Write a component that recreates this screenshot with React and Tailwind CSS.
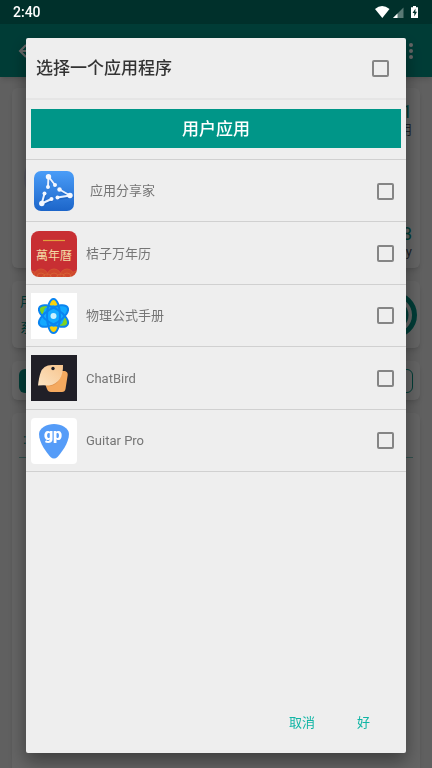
import React, { useState } from 'react';

const ShareIcon = () => (
  <svg viewBox="0 0 40 40" className="mx-[3px] w-10 h-10 shrink-0" aria-hidden="true">
    <defs>
      <linearGradient id="shareBg" x1="0" y1="0" x2="0" y2="1">
        <stop offset="0" stopColor="#4a9df8" />
        <stop offset="1" stopColor="#1c65c9" />
      </linearGradient>
    </defs>
    <rect width="40" height="40" rx="7" fill="url(#shareBg)" />
    <path
      d="M14 16 14.500 5.500 21 14M25.500 18.500 36 24.500 23.500 26.500M17.500 28 7.800 32.500 10.500 22.500"
      transform="translate(0.800 1.200)"
      fill="none"
      stroke="#0f4fa8"
      strokeOpacity="0.400"
      strokeWidth="2.400"
      strokeLinecap="round"
    />
    <path
      d="M14 16 14.500 5.500 21 14M25.500 18.500 36 24.500 23.500 26.500M17.500 28 7.800 32.500 10.500 22.500"
      fill="none"
      stroke="#eaf2ff"
      strokeWidth="2"
      strokeLinecap="round"
      strokeLinejoin="round"
    />
    <g fill="#f4f8ff">
      <circle cx="14.500" cy="5.800" r="2.700" />
      <circle cx="14" cy="16" r="2" />
      <circle cx="21" cy="14" r="2" />
      <circle cx="36" cy="24.500" r="2.700" />
      <circle cx="25.500" cy="18.500" r="2.200" />
      <circle cx="23.500" cy="26.500" r="2" />
      <circle cx="7.800" cy="32.500" r="2.700" />
      <circle cx="10.500" cy="22.500" r="2" />
      <circle cx="17.500" cy="28" r="2" />
    </g>
  </svg>
);

const CalendarIcon = () => (
  <svg viewBox="0 0 46 46" className="w-[46px] h-[46px] shrink-0" aria-hidden="true">
    <defs>
      <clipPath id="calClip">
        <rect width="46" height="46" rx="8" />
      </clipPath>
    </defs>
    <g clipPath="url(#calClip)">
      <rect width="46" height="46" fill="#c82f33" />
      <path d="M12 9.500H34" stroke="#e2a13c" strokeWidth="1.200" />
      <g fill="#cf472c" stroke="#d45a32" strokeWidth="0.800">
        <circle cx="0" cy="47" r="7" />
        <circle cx="10" cy="45" r="7" />
        <circle cx="23" cy="45" r="7" />
        <circle cx="36" cy="45" r="7" />
        <circle cx="46" cy="47" r="7" />
      </g>
      <g fill="none" stroke="#d96a38" strokeWidth="0.700">
        <circle cx="10" cy="46" r="4" />
        <circle cx="23" cy="46" r="4" />
        <circle cx="36" cy="46" r="4" />
        <circle cx="16" cy="48" r="5" />
        <circle cx="30" cy="48" r="5" />
      </g>
      <text
        x="23"
        y="29"
        textAnchor="middle"
        fontSize="12"
        fill="#f3d9a4"
        className="font-['Noto_Sans_CJK_TC',sans-serif]"
      >萬年曆</text>
    </g>
  </svg>
);

const AtomIcon = () => (
  <svg viewBox="0 0 46 46" className="w-[46px] h-[46px] shrink-0" aria-hidden="true">
    <rect width="46" height="46" fill="#fff" />
    <ellipse cx="22.500" cy="23" rx="6.500" ry="17" fill="#fdd20a" />
    <ellipse cx="22.500" cy="23" rx="7.500" ry="16.500" fill="#7ed321" transform="rotate(-58 22.500 23)" />
    <ellipse cx="22.500" cy="23" rx="7.500" ry="16.500" fill="#12a9ff" transform="rotate(58 22.500 23)" />
    <path d="M22.500 12 32 17 34 24 31 31 22.500 34 13 29 11 23 14 15z" fill="#12a9ff" />
    <g fill="none" stroke="#0a84f0" strokeWidth="2">
      <ellipse cx="22.500" cy="23" rx="6.500" ry="17" />
      <ellipse cx="22.500" cy="23" rx="7.500" ry="16.500" transform="rotate(58 22.500 23)" />
      <ellipse cx="22.500" cy="23" rx="7.500" ry="16.500" transform="rotate(-58 22.500 23)" />
    </g>
    <circle cx="22.500" cy="23" r="3" fill="#c9f1ff" />
  </svg>
);

const BirdIcon = () => (
  <svg viewBox="0 0 46 46" className="w-[46px] h-[46px] shrink-0" aria-hidden="true">
    <defs>
      <linearGradient id="birdHead" x1="1" y1="0" x2="0" y2="1">
        <stop offset="0" stopColor="#f8c58e" />
        <stop offset="1" stopColor="#fbe3c2" />
      </linearGradient>
    </defs>
    <rect width="46" height="46" fill="#201f27" />
    <path d="M30 16H34Q37 17 36.700 20L34.500 34Q34 37 31 37H20Q17 37 16 34L14.500 30z" fill="#f4a95f" />
    <path d="M15 31Q27 33 31.500 17L30 17 20 30z" fill="#e2954f" />
    <path d="M7 30.500Q8 22 9.500 18Q12 10 21 10H32Q32.500 28 18 30.500Q12 29.800 7 30.500z" fill="url(#birdHead)" />
    <circle cx="22" cy="13.500" r="1.700" fill="#201f27" />
  </svg>
);

const GuitarIcon = () => (
  <svg viewBox="0 0 46 46" className="w-[46px] h-[46px] shrink-0" aria-hidden="true">
    <rect width="46" height="46" rx="4" fill="#fff" />
    <path d="M23 6C30 6 38 10 38 16C38 25 30 35 26.500 39Q23 42 19.500 39C16 35 8 25 8 16C8 10 16 6 23 6z" fill="#559cf8" />
    <text
      x="22"
      y="22"
      textAnchor="middle"
      fontSize="16"
      fill="#fff"
      className="font-[Roboto,sans-serif] font-black"
    >gp</text>
  </svg>
);

const apps = [
  { id: 'share', name: '应用分享家', icon: ShareIcon, indent: true },
  { id: 'calendar', name: '桔子万年历', icon: CalendarIcon },
  { id: 'physics', name: '物理公式手册', icon: AtomIcon },
  { id: 'chatbird', name: 'ChatBird', icon: BirdIcon },
  { id: 'guitar', name: 'Guitar Pro', icon: GuitarIcon },
];

const CheckBox = (props) => (
  <input
    type="checkbox"
    className="appearance-none w-[17px] h-[17px] shrink-0 border-2 border-[#858585] rounded-xs checked:bg-[#009688] checked:border-[#009688]"
    {...props}
  />
);

const StatusBar = () => (
  <div className="fixed top-0 inset-x-0 z-20 h-6 px-[13px] flex items-center justify-between text-white">
    <span className="text-sm font-medium">2:40</span>
    <svg viewBox="0 0 44 12" className="w-11 h-3" aria-hidden="true">
      <path d="M0 3Q7-3 14.500 3L7.300 12z" fill="#fff" />
      <path d="M28.500 1.500V12H18z" fill="#fff" fillOpacity="0.350" />
      <path d="M22.500 7.500V12H18z" fill="#fff" />
      <path d="M38 0H41V1.200H43V12H36V1.200H38z" fill="#fff" />
      <path d="M40.500 2.500 37.500 7H39.300V10.500L42 5.800H40.300z" fill="#00302b" />
    </svg>
  </div>
);

const StatsPage = () => (
  <div className="min-h-screen flex flex-col bg-[#f0f0f0]" aria-hidden="true">
    <div className="h-6 bg-[#00796b]" />
    <div className="h-[53px] px-[18px] flex items-center justify-between bg-[#009688] text-white shadow-md">
      <svg viewBox="0 0 16 16" className="w-4 h-4" fill="none" stroke="currentColor" strokeWidth="2">
        <path d="M8 2 2 8 8 14M2 8H16" />
      </svg>
      <svg viewBox="0 0 6 16" className="w-1.5 h-4" fill="currentColor">
        <circle cx="3" cy="2" r="2" />
        <circle cx="3" cy="8" r="2" />
        <circle cx="3" cy="14" r="2" />
      </svg>
    </div>
    <div className="flex-1 flex flex-col gap-[13px] px-3 pt-[11px]">
      <div className="h-[180px] pl-3 pr-2 flex items-center justify-between bg-[#fafafa] rounded-md shadow-md">
        <div className="w-16 h-16 rounded-full bg-[#dcdcf0]" />
        <div className="h-full pt-3.5 pb-2 flex flex-col justify-between text-right">
          <div>
            <div className="text-lg leading-5 text-[#009688]">1</div>
            <div className="text-[13px] leading-4 text-gray-600">应用</div>
          </div>
          <div>
            <div className="text-lg leading-5 text-[#009688]">3</div>
            <div className="text-[13px] leading-4 text-gray-600">Day</div>
          </div>
        </div>
      </div>
      <div className="h-[67px] pl-2 pr-[3px] flex items-center justify-between bg-[#fafafa] rounded-md shadow-md">
        <div className="text-[13px] leading-[26px] text-[#009688]">
          <div>用户</div>
          <div>系统</div>
        </div>
        <svg viewBox="0 0 46 46" className="w-[46px] h-[46px]">
          <circle cx="23" cy="23" r="20.500" fill="none" stroke="#009688" strokeWidth="5" />
          <circle cx="23" cy="23" r="14.500" fill="#009688" />
        </svg>
      </div>
      <div className="h-[39px] px-[7px] flex items-center bg-[#fafafa] rounded-md shadow-md">
        <div className="flex-1 h-6 rounded-l-md bg-[#009688]" />
        <div className="flex-1 h-6 rounded-r-md border border-[#009688]" />
      </div>
      <div className="flex-1 px-[7px] bg-[#fafafa] rounded-t-md shadow-md">
        <div className="h-[45px] pt-4 pl-1 border-b border-[#80cbc4] text-sm text-[#009688]">:</div>
      </div>
    </div>
  </div>
);

const App = () => {
  const [selected, setSelected] = useState([]);
  const allSelected = selected.length === apps.length;

  const toggle = (id) => {
    setSelected((prev) => (prev.includes(id) ? prev.filter((x) => x !== id) : [...prev, id]));
  };

  return (
    <div className="min-h-screen font-[Roboto,'Noto_Sans_CJK_SC',sans-serif]">
      <StatsPage />
      <StatusBar />

      <div className="fixed inset-0 z-10 flex bg-black/60 px-[26px] pt-[38px] pb-[15px]">
        <div
          role="dialog"
          aria-labelledby="dialog-title"
          className="flex-1 flex flex-col bg-[#eeeeee] rounded-xs shadow-[0_8px_18px_rgba(0,0,0,0.4)]"
        >
          <div className="h-[62px] pl-2.5 pr-[17px] flex items-center justify-between border-b-2 border-[#e5e5e5]">
            <h1 id="dialog-title" className="pt-0.5 text-[17px] font-medium text-[#333333]">选择一个应用程序</h1>
            <CheckBox
              aria-label="全选"
              checked={allSelected}
              onChange={() => setSelected(allSelected ? [] : apps.map((a) => a.id))}
            />
          </div>

          <div className="px-[5px] pt-[9px] pb-[11px] border-b border-[#d0d0d0]">
            <button className="w-full h-[39px] pt-0.5 bg-[#009688] text-white text-[17px] font-medium">用户应用</button>
          </div>

          <ul className="grid grid-rows-5 h-[312px]">
            {apps.map(({ id, name, icon: Icon, indent }) => (
              <li key={id} className="border-b border-[#d0d0d0]">
                <label className="h-full pt-px pl-[5px] pr-3 flex items-center">
                  <Icon />
                  <span className={`flex-1 text-[13px] text-[#757575] ${indent ? 'pl-[13px]' : 'pl-[9px]'}`}>{name}</span>
                  <CheckBox checked={selected.includes(id)} onChange={() => toggle(id)} />
                </label>
              </li>
            ))}
          </ul>

          <div className="flex-1 px-5 pb-3 flex items-end justify-end gap-2.5 text-[13px] text-[#10b5a5]">
            <button className="h-9 px-4" onClick={() => setSelected([])}>取消</button>
            <button className="h-9 px-4">好</button>
          </div>
        </div>
      </div>
    </div>
  );
};

export default App;
